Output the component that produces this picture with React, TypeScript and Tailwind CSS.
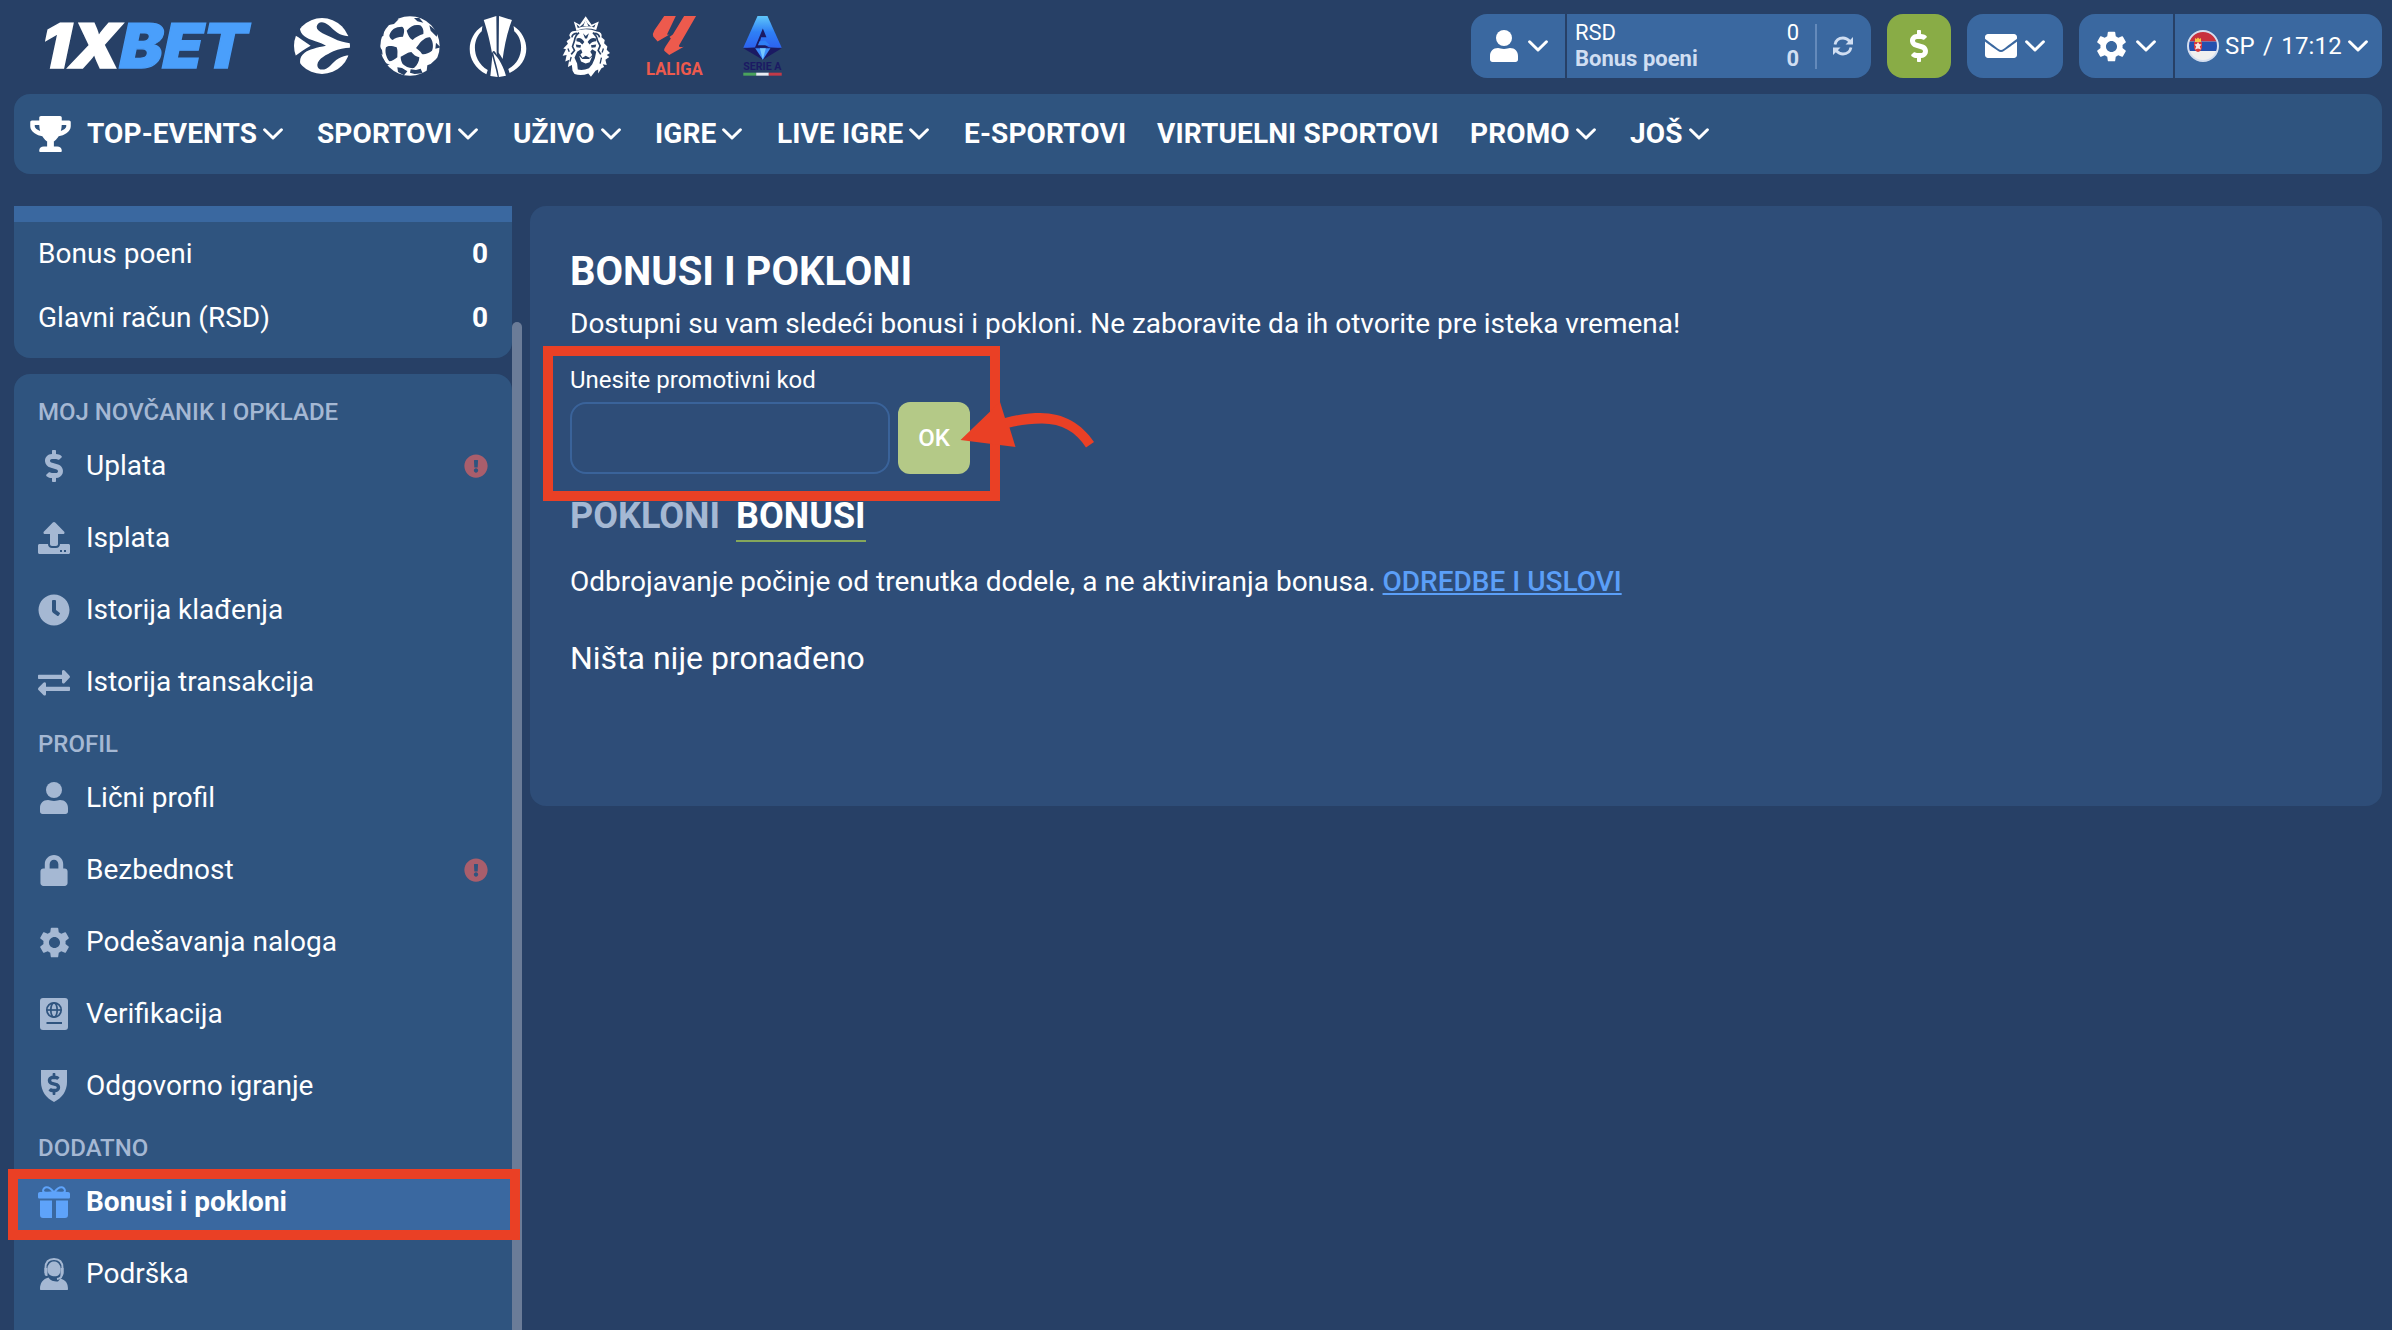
import React from "react";
import {
  FaTrophy,
  FaEnvelope,
  FaLock,
  FaClock,
  FaExclamationCircle,
  FaDollarSign,
} from "react-icons/fa";
import { MdSettings } from "react-icons/md";

type IconProps = { className?: string };

const ChevronDown = ({ className = "" }: IconProps) => (
  <svg viewBox="0 0 20 12" className={`h-3 w-5 shrink-0 ${className}`} fill="none">
    <path
      d="M1.6 1.8L10 10L18.4 1.8"
      stroke="currentColor"
      strokeWidth="3"
      strokeLinecap="round"
      strokeLinejoin="round"
    />
  </svg>
);

const UserIcon = ({ className = "" }: IconProps) => (
  <svg viewBox="0 0 28 32" className={className} fill="currentColor">
    <circle cx="14" cy="8" r="8" />
    <path d="M8 18C10 18 11 19 14 19C17 19 18 18 20 18C25 18 28 21.500 28 26V29.500C28 31 27 32 25.500 32H2.500C1 32 0 31 0 29.500V26C0 21.500 3 18 8 18Z" />
  </svg>
);

const RefreshIcon = () => (
  <svg viewBox="0 0 20 20" className="size-5" fill="none">
    <path
      d="M2 8.500C3 4 6.500 2 10 2C13 2 15 3.400 17 5.500M18 11.500C17 16 13.500 18 10 18C7 18 5 16.600 3 14.500"
      stroke="currentColor"
      strokeWidth="2.800"
    />
    <path d="M20 1V8.500H12.500ZM0 19V11.500H7.500Z" fill="currentColor" />
  </svg>
);

const UploadIcon = () => (
  <svg viewBox="0 0 32 32" className="size-8" fill="currentColor">
    <path d="M14.800 .6C15.500-.2 16.500-.2 17.200 .6L26 9.400C27 10.500 26.500 12 25 12H20V22C20 23.200 19.200 24 18 24H14C12.800 24 12 23.200 12 22V12H7C5.500 12 5 10.500 6 9.400Z" />
    <path
      fillRule="evenodd"
      d="M1.500 22H10C10 24.500 11.700 26 14 26H18C20.300 26 22 24.500 22 22H30.500C31.300 22 32 22.700 32 23.500V30.500C32 31.300 31.300 32 30.500 32H1.500C.7 32 0 31.300 0 30.500V23.500C0 22.700 .7 22 1.500 22ZM22 28V30H24V28ZM26 28V30H28V28Z"
    />
  </svg>
);

const SwapIcon = () => (
  <svg viewBox="0 0 32 32" className="size-8" fill="currentColor">
    <path d="M1 8.800H24V5.500C24 4 25.500 3.400 26.600 4.500L31.300 9.500C32.200 10.400 32.200 11.200 31.300 12.100L26.600 17C25.500 18.100 24 17.400 24 16V13H1C.4 13 0 12.600 0 12V9.800C0 9.200 .4 8.800 1 8.800Z" />
    <path d="M31 20.800H8V17.800C8 16.300 6.500 15.700 5.400 16.800L.7 21.600C-.2 22.500-.2 23.300 .7 24.200L5.400 29C6.500 30.100 8 29.500 8 28V25H31C31.600 25 32 24.600 32 24V21.800C32 21.200 31.600 20.800 31 20.800Z" />
  </svg>
);

const PassportIcon = () => (
  <svg viewBox="0 0 28 32" className="h-8 w-7">
    <rect width="28" height="32" rx="3" fill="currentColor" />
    <g fill="none" stroke="#2f547f" strokeWidth="1.700">
      <circle cx="14" cy="12" r="7.200" />
      <ellipse cx="14" cy="12" rx="3.200" ry="7.200" />
      <path d="M7 12H21" />
      <path d="M6.500 25H22" strokeWidth="2" />
    </g>
  </svg>
);

const ShieldIcon = () => (
  <span className="relative flex h-8 w-[26px] justify-center">
    <svg viewBox="0 0 26 32" className="h-8 w-[26px]">
      <path d="M0 0H26V12C26 21 21 28 13 32C5 28 0 21 0 12Z" fill="currentColor" />
    </svg>
    <FaDollarSign className="absolute top-[3px] size-[22px] text-[#2f547f]" />
  </span>
);

const GiftIcon = () => (
  <svg viewBox="0 0 32 32" className="size-8" fill="currentColor">
    <path
      d="M16 6.500C13 6.500 9 7 6.500 6.500C4 6 5 1.500 8.500 1.200C12 1 14 4 16 6.500C18 4 20 1 23.500 1.200C27 1.500 28 6 25.500 6.500C23 7 19 6.500 16 6.500Z"
      fill="none"
      stroke="currentColor"
      strokeWidth="2"
    />
    <path d="M2 6H30C31.200 6 32 6.800 32 8V11C32 12 31.500 12.500 30.500 12.500H1.500C.5 12.500 0 12 0 11V8C0 6.800 .8 6 2 6ZM2 14.500H14V32H5C3 32 2 31 2 29ZM18 14.500H30V29C30 31 29 32 27 32H18Z" />
  </svg>
);

const SupportIcon = () => (
  <svg viewBox="0 0 28 32" className="h-8 w-7" fill="currentColor">
    <path
      d="M5.500 15V10C5.500 4 9 1 14 1C19 1 22.500 4 22.500 10V14C22.500 18 21 20.500 17 21"
      fill="none"
      stroke="currentColor"
      strokeWidth="2"
    />
    <path d="M7.500 9C9 5 11 3.500 14 3.500C17 3.500 19 5 20.500 9V12.500C20.500 16 18.500 18 16 18.300H13.500C9.500 18 7.500 15 7.500 12Z" />
    <path d="M4.500 10H7.500V18H6.500C5 18 4.500 17 4.500 15Z" />
    <path d="M20.500 10H23.500V15C23.500 17 22.500 18 20.500 18Z" />
    <path d="M8.500 19.500C10.500 22.500 13 23.500 18 23.500L20.500 20.500C25.500 22 28 25 28 31C28 31.600 27.700 32 27 32H1C.3 32 0 31.600 0 31C0 25 3 21 8.500 19.500Z" />
  </svg>
);

const Logo = () => (
  <svg viewBox="-10 -14 230 76" className="-ml-2.5 -mt-3.5 h-[76px] w-[230px] shrink-0" fontFamily="Inter, sans-serif" fontWeight="900">
    <g transform="skewX(-12)" strokeWidth="1.400">
      <text x="7" y="46.300" fontSize="61.500" fill="#fff" stroke="#fff" textLength="80" lengthAdjust="spacingAndGlyphs">
        1X
      </text>
      <text x="86" y="46.300" fontSize="61.500" fill="#4a9ffb" stroke="#4a9ffb" textLength="127" lengthAdjust="spacingAndGlyphs">
        BET
      </text>
    </g>
  </svg>
);

const EuroleagueLogo = () => (
  <svg viewBox="42 54 168 168" className="size-14">
    <circle cx="126" cy="138" r="84" fill="#fff" />
    <g fill="#274066">
      <path d="M214 108C180 112 164 92 146 76C128 60 112 66 110 80C110 96 140 104 160 115C178 125 196 128 214 130Z" />
      <path d="M214 166C186 164 166 180 150 198C134 214 112 212 112 194C114 176 140 164 160 154C178 146 196 144 214 143Z" />
      <path d="M60 74C56 104 76 114 106 124C118 128 130 132 138 137C112 142 86 148 74 158C60 168 58 182 62 198L40 172C56 160 74 146 92 137C76 126 60 114 42 104Z" />
    </g>
  </svg>
);

const ChampionsLogo = () => (
  <svg viewBox="300 48 180 180" className="size-[60px]">
    <circle cx="390" cy="138" r="89" fill="#fff" />
    <g fill="#274066">
      <path d="M328 106C334 88 346 80 366 80C374 84 374 94 369 110C354 110 344 114 338 120C332 118 328 112 328 106Z" />
      <path d="M380 92C392 78 404 72 420 76C428 80 432 92 430 102C418 106 406 112 398 120C390 116 384 106 380 92Z" />
      <path d="M420 128C428 120 440 110 450 112C458 120 462 140 456 152C446 160 434 164 426 162C420 152 412 148 408 144C412 138 416 134 420 128Z" />
      <path d="M362 170C374 166 384 156 394 156C400 164 408 170 418 172C418 184 412 196 402 204C390 206 376 200 368 192C364 184 362 178 362 170Z" />
      <path d="M318 142C326 136 336 138 350 142C354 152 352 160 352 172C344 178 336 184 328 184C318 172 314 154 318 142Z" />
      <path d="M322 76L342 72L356 58L338 56ZM402 54L412 64L430 68L418 54ZM448 76L452 92L470 110L474 96ZM468 128L466 146L482 142ZM474 172L452 192L442 196L440 212L460 210ZM422 206L408 210L392 208L390 218L404 222L428 220ZM382 214L366 204L352 202L354 216L372 226ZM330 194L318 190L306 170L310 196ZM300 142L306 150L308 164L298 158ZM300 112L310 108L312 92L304 96Z" />
    </g>
  </svg>
);

const EuropaLogo = () => (
  <svg viewBox="568 48 174 184" className="h-[61px] w-[58px]" fill="#fff">
    <path d="M608 78C556 112 554 190 620 224L624 211C576 182 576 120 606 94ZM702 78C754 112 756 190 690 220L686 208C734 180 734 120 704 94Z" />
    <path d="M612 60L650 48L651 166C646 152 640 150 637 160C632 132 624 96 612 60ZM658 48L697 60C682 100 674 140 669 178C664 168 660 164 657 158ZM638 168C642 186 648 204 654 232L632 229ZM640 158C650 168 668 188 679 228L658 232C654 204 646 184 640 158Z" />
  </svg>
);

const PremierLogo = () => (
  <svg viewBox="846 46 146 184" className="h-[61px] w-12">
    <path d="M882 62L900 72L918 46L936 72L958 62L950 88Q918 78 890 90Z" fill="#fff" />
    <path d="M890 70L900 79L912 68L918 58L924 68L936 79L948 70L944 80Q918 72 894 82Z" fill="#274066" />
    <path d="M918 56L926 76H911Z" fill="#fff" />
    <path
      d="M886 91Q872 90 868 104L872 112L860 122L864 130L850 144L858 146L848 166L860 164L856 184L868 178L864 200L876 194L878 212L884 222Q906 228 926 220L934 230L948 212L956 208V220L966 204L974 200L970 192L982 194L978 178L990 170L982 164L992 158L982 148L984 138L974 128L976 118L966 110Q970 94 952 92Q920 80 886 91Z"
      fill="#fff"
    />
    <g fill="none" stroke="#274066" strokeWidth="5">
      <path d="M876 110Q878 98 892 98M960 110Q958 98 944 98" />
      <path d="M898 96Q886 104 884 120L878 138L884 150L874 162M940 96Q952 106 954 120L962 136L956 150L964 162" />
      <path d="M864 144L868 154M874 170L870 184M972 144L968 156M966 172L962 190" strokeWidth="4" />
    </g>
    <g fill="#274066">
      <path d="M890 114Q904 108 914 124L908 132Q900 122 890 122ZM950 114Q934 108 924 124L930 132Q938 122 950 122Z" />
      <path d="M888 132L904 134L902 142L890 140ZM950 132L934 134L936 142L948 140Z" />
      <path d="M892 154L904 146L908 156L902 162L908 172L918 166L930 172L938 164L932 154L938 146L950 154L946 174L938 192L928 204Q910 212 894 208L892 190L884 172Z" />
      <path d="M910 98L918 106L928 98L922 114H916Z" />
    </g>
    <path d="M898 166L908 176L928 176L938 168L930 186L918 190L904 184Z" fill="#fff" />
  </svg>
);

const LaligaLogo = () => (
  <svg viewBox="666 36 194 205" className="-m-1 h-[68px] w-[65px]" fill="#ed5a4d">
    <path d="M732 48H767L741 102Q740 106 748 104L712 125L699 110Q696 102 702 92Z" />
    <path d="M792 48H828L777 136Q774 144 791 141L747 166L732 153Q730 149 736 140L752 116L748 111L758 104Z" />
    <text x="677" y="227" fontFamily="Roboto, sans-serif" fontWeight="700" fontSize="54" textLength="171" lengthAdjust="spacingAndGlyphs">
      LALIGA
    </text>
  </svg>
);

const SerieALogo = () => (
  <svg viewBox="968 48 116 181" className="h-[60px] w-[39px]">
    <defs>
      <linearGradient id="serie" x1="0" y1="0" x2="0" y2="1">
        <stop offset="0" stopColor="#5fc6fa" />
        <stop offset=".5" stopColor="#2f80f6" />
        <stop offset="1" stopColor="#2c62f0" />
      </linearGradient>
    </defs>
    <path d="M1011 48H1041L1084 144H968Z" fill="url(#serie)" />
    <path d="M968 145L1006 143H1046L1084 145L1027 180Z" fill="#1b1a63" />
    <path d="M1027 86L1038 112H1022L1018 126L1048 144H1003Z" fill="#1b1a63" />
    <path d="M1017 124L1034 122L1048 136H1012Z" fill="#2f80f6" />
    <path d="M1004 145H1050L1027 180Z" fill="#3d8dfa" />
    <path d="M1018 145H1036L1027 180Z" fill="#75c8ff" />
    <text x="968" y="211" fontFamily="Roboto, sans-serif" fontWeight="700" fontSize="33" fill="#1b1a63" textLength="115" lengthAdjust="spacingAndGlyphs">
      SERIE A
    </text>
    <path d="M968 219H1007V228H968Z" fill="#4ba35c" />
    <path d="M1007 219H1045V228H1007Z" fill="#e8ecf2" />
    <path d="M1045 219H1084V228H1045Z" fill="#c23a48" />
  </svg>
);

const SerbiaFlag = () => (
  <svg viewBox="0 0 32 32" className="size-8 shrink-0">
    <clipPath id="flag">
      <circle cx="16" cy="16" r="15" />
    </clipPath>
    <g clipPath="url(#flag)">
      <rect width="32" height="32" fill="#f0f0f0" />
      <rect width="32" height="11.500" fill="#c8313e" />
      <rect y="11.500" width="32" height="9.500" fill="#2450ae" />
      <path d="M7 12H15V18Q14 21.500 11 22Q8 21.500 7 18Z" fill="#d63a3f" />
      <path d="M8 8L9.500 9L11 7.500L12.500 9L14 8V12H8Z" fill="#f6c64a" />
      <path d="M11 12L12.200 14L14.500 14.500L12.800 16.500L14 19.500L11 18.500L8 19.500L9.200 16.500L7.500 14.500L9.800 14Z" fill="#f7e6df" />
    </g>
    <circle cx="16" cy="16" r="15" fill="none" stroke="#d5dff0" strokeWidth="2" />
  </svg>
);

const navItems = [
  { label: "TOP-EVENTS", width: "w-[230px]", arrow: true },
  { label: "SPORTOVI", width: "w-[196px]", arrow: true },
  { label: "UŽIVO", width: "w-[142px]", arrow: true },
  { label: "IGRE", width: "w-[122px]", arrow: true },
  { label: "LIVE IGRE", width: "w-[187px]", arrow: true },
  { label: "E-SPORTOVI", width: "w-[193px]", arrow: false },
  { label: "VIRTUELNI SPORTOVI", width: "w-[313px]", arrow: false },
  { label: "PROMO", width: "w-[160px]", arrow: true },
  { label: "JOŠ", width: "w-[90px]", arrow: true },
];

const menu = [
  {
    title: "MOJ NOVČANIK I OPKLADE",
    items: [
      { label: "Uplata", icon: <FaDollarSign className="size-8" />, alert: true },
      { label: "Isplata", icon: <UploadIcon /> },
      { label: "Istorija klađenja", icon: <FaClock className="size-8" /> },
      { label: "Istorija transakcija", icon: <SwapIcon /> },
    ],
  },
  {
    title: "PROFIL",
    items: [
      { label: "Lični profil", icon: <UserIcon className="h-8 w-7" /> },
      { label: "Bezbednost", icon: <FaLock className="h-[31px] w-7" />, alert: true },
      { label: "Podešavanja naloga", icon: <MdSettings className="size-[37px] shrink-0" /> },
      { label: "Verifikacija", icon: <PassportIcon /> },
      { label: "Odgovorno igranje", icon: <ShieldIcon /> },
    ],
  },
  {
    title: "DODATNO",
    items: [
      { label: "Bonusi i pokloni", icon: <GiftIcon />, active: true },
      { label: "Podrška", icon: <SupportIcon /> },
    ],
  },
];

type MenuItem = {
  label: string;
  icon: React.ReactNode;
  alert?: boolean;
  active?: boolean;
};

const MenuRow = ({ label, icon, alert, active }: MenuItem) => (
  <div
    className={`relative my-1 flex h-16 shrink-0 items-center px-6 text-[28px] ${
      active ? "bg-[#3a68a0] font-bold" : ""
    }`}
  >
    <span
      className={`mr-4 flex size-8 items-center justify-center ${
        active ? "text-[#5ea3fa]" : "text-[#a5b8d3]"
      }`}
    >
      {icon}
    </span>
    <span>{label}</span>
    {alert && <FaExclamationCircle className="ml-auto size-6 text-[#a95e6c]" />}
    {active && (
      <div className="absolute -left-1.5 -top-px z-10 h-[71px] w-[512px] border-[10px] border-[#ea4025]" />
    )}
  </div>
);

const Header = () => (
  <header className="flex h-[94px] items-start pl-[40px] pr-2.5">
    <div className="flex h-[94px] w-[254px] items-start pt-[22px]">
      <Logo />
    </div>
    <div className="flex h-[60px] items-center pt-8">
      <div className="mr-[30px]">
        <EuroleagueLogo />
      </div>
      <div className="mr-[29px]">
        <ChampionsLogo />
      </div>
      <div className="mr-[35px]">
        <EuropaLogo />
      </div>
      <div className="mr-9">
        <PremierLogo />
      </div>
      <div className="mr-[40px]">
        <LaligaLogo />
      </div>
      <SerieALogo />
    </div>
    <div className="ml-auto flex gap-4 pt-3.5">
      <div className="flex h-16 w-[400px] gap-0.5">
        <div className="flex w-[94px] items-center rounded-l-2xl bg-[#3a68a0] pl-[19px]">
          <UserIcon className="mr-2.5 h-8 w-7" />
          <ChevronDown />
        </div>
        <div className="flex flex-1 items-center rounded-r-2xl bg-[#3a68a0] pl-2">
          <div className="flex w-[224px] flex-col text-[22px] leading-[26px]">
            <div className="flex justify-between">
              <span>RSD</span>
              <span>0</span>
            </div>
            <div className="flex justify-between font-bold text-[#d0def2]">
              <span>Bonus poeni</span>
              <span>0</span>
            </div>
          </div>
          <div className="ml-4 mr-4 h-[45px] w-0.5 bg-[#648abb]" />
          <div className="text-[#d0def2]">
            <RefreshIcon />
          </div>
        </div>
      </div>
      <div className="flex size-16 items-center justify-center rounded-2xl bg-[#89ac46]">
        <FaDollarSign className="size-8" />
      </div>
      <div className="flex h-16 w-24 items-center gap-2 rounded-2xl bg-[#3a68a0] pl-[18px]">
        <FaEnvelope className="size-8" />
        <ChevronDown />
      </div>
      <div className="flex h-16 gap-0.5">
        <div className="flex w-[94px] items-center gap-1.5 rounded-l-2xl bg-[#3a68a0] pl-3.5">
          <MdSettings className="size-[37px] shrink-0" />
          <ChevronDown />
        </div>
        <div className="flex w-[207px] items-center rounded-r-2xl bg-[#3a68a0] pl-3">
          <SerbiaFlag />
          <span className="ml-1.5 w-[117px] whitespace-nowrap text-[24px] tracking-[0.2px] [word-spacing:2px]">
            SP / 17:12
          </span>
          <ChevronDown className="ml-1.5" />
        </div>
      </div>
    </div>
  </header>
);

const NavBar = () => (
  <nav className="mx-3.5 mr-2.5 flex h-20 items-center rounded-2xl bg-[#2f547f] pl-4 text-[28px] font-bold tracking-[0.13px]">
    <FaTrophy className="mr-4 h-9 w-[41px]" />
    {navItems.map((item) => (
      <div key={item.label} className={`flex items-center whitespace-nowrap ${item.width}`}>
        {item.label}
        {item.arrow && <ChevronDown className="ml-1.5" />}
      </div>
    ))}
  </nav>
);

const Sidebar = () => (
  <aside className="flex w-[508px] shrink-0 items-stretch">
    <div className="flex w-[498px] flex-col">
      <div className="h-4 shrink-0 bg-[#3a68a0]" />
      <div className="mb-4 h-[136px] shrink-0 rounded-b-2xl bg-[#2f547f] px-6 text-[28px]">
        <div className="flex h-16 items-center justify-between">
          <span>Bonus poeni</span>
          <span className="font-bold">0</span>
        </div>
        <div className="flex h-16 items-center justify-between">
          <span>Glavni račun (RSD)</span>
          <span className="font-bold">0</span>
        </div>
      </div>
      <div className="flex-1 rounded-t-2xl bg-[#2f547f] pt-3">
        {menu.map((group) => (
          <div key={group.title} className="flex flex-col">
            <div className="flex h-11 shrink-0 items-center px-6 pt-2 text-[24px] font-medium text-[#a5b8d3]">
              {group.title}
            </div>
            {group.items.map((item) => (
              <MenuRow key={item.label} {...item} />
            ))}
          </div>
        ))}
      </div>
    </div>
    <div className="mt-[116px] w-2.5 rounded-t-full bg-[#6b7c98]" />
  </aside>
);

const PromoForm = () => (
  <div className="relative h-[106px] w-[400px]">
    <p className="h-8 text-[24px] leading-6">Unesite promotivni kod</p>
    <div className="mt-0.5 flex gap-2">
      <input className="h-[72px] w-80 rounded-2xl border-2 border-[#3a639a] bg-transparent" />
      <button className="size-[72px] rounded-xl bg-[#b4c987] text-[24px] font-medium">OK</button>
    </div>
    <div className="absolute -left-[27px] -top-[22px] z-10 h-[155px] w-[457px] border-[10px] border-[#ea4025]" />
    <svg viewBox="960 400 136 50" className="absolute left-[390px] top-8 z-10 h-[50px] w-[136px]" fill="#ea4025">
      <path d="M960.500 440L1000 402L1005 418C1020 414 1032 413 1040 413C1064 413 1082 424 1094 442L1086 447.500C1076 432 1062 423.500 1042 423.500C1030 423.500 1020 425 1009.500 427.500L1015.500 447Z" />
    </svg>
  </div>
);

const Content = () => (
  <main className="ml-2 mr-2.5 h-[600px] flex-1 rounded-2xl bg-[#2e4d78] px-10 pt-10">
    <h1 className="h-[58px] pt-px text-[40px] font-bold leading-[50px]">BONUSI I POKLONI</h1>
    <p className="h-16 text-[28px] leading-10">
      Dostupni su vam sledeći bonusi i pokloni. Ne zaboravite da ih otvorite pre isteka vremena!
    </p>
    <PromoForm />
    <div className="mt-5 flex h-12 gap-4 text-[36px] font-bold leading-[44px]">
      <span className="text-[#a5b8d3]">POKLONI</span>
      <span className="border-b-2 border-[#85a75a]">BONUSI</span>
    </div>
    <p className="mt-5 text-[28px] leading-10">
      Odbrojavanje počinje od trenutka dodele, a ne aktiviranja bonusa.{" "}
      <span className="font-medium text-[#5b9ff8] underline">ODREDBE I USLOVI</span>
    </p>
    <p className="mt-9 text-[32px] leading-10">Ništa nije pronađeno</p>
  </main>
);

const App = () => {
  return (
    <div className="flex h-screen w-full flex-col overflow-hidden bg-[#274066] font-['Roboto',sans-serif] text-white">
      <Header />
      <NavBar />
      <div className="mt-8 flex flex-1 items-start pl-3.5">
        <div className="flex h-[1124px]">
          <Sidebar />
        </div>
        <Content />
      </div>
    </div>
  );
};

export default App;
